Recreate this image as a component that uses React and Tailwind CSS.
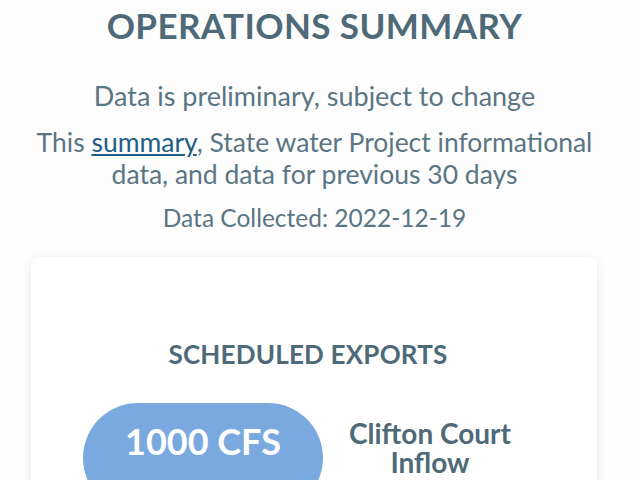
import React from 'react';

const font = { fontFamily: 'Lato, "Open Sans", sans-serif' };

const App = () => {
  return (
    <div className="min-h-[480px] w-[640px] overflow-hidden bg-[#fdfdfd] text-[#5a7583]" style={font}>
      <div className="flex flex-col items-center pr-[11px] text-center">
        <h1 className="mt-[1px] text-[35px] font-bold leading-[48px] tracking-[0.4px] text-[#4e6a78]">
          OPERATIONS SUMMARY
        </h1>
        <p className="mt-[31px] text-[27px] leading-[32px]">Data is preliminary, subject to change</p>
        <p className="mt-[14px] max-w-[560px] text-[26.5px] leading-[32px]">
          This{' '}
          <a href="#" className="text-[#1f5f86] underline underline-offset-2">
            summary
          </a>
          , State water Project informational data, and data for previous 30 days
        </p>
        <p className="mt-[13px] text-[24.5px] leading-[30px]">Data Collected: 2022-12-19</p>
      </div>

      <div className="ml-[31px] mt-[24px] h-[300px] w-[566px] rounded-lg bg-white shadow-[0_2px_12px_rgba(0,0,0,0.08)]">
        <div className="flex flex-col items-center pr-[12px] pt-[82px]">
          <h2 className="text-[26px] font-bold leading-[30px] tracking-[0.2px] text-[#4e6a78]">
            SCHEDULED EXPORTS
          </h2>
        </div>
        <div className="mt-[34px] flex items-center pl-[52px]">
          <div className="flex h-[110px] w-[240px] items-center justify-center rounded-full bg-[#7aa9e0] pb-[34px]">
            <span className="text-[36px] font-bold text-white">1000 CFS</span>
          </div>
          <div className="ml-[17px] w-[180px] pb-[20px] text-center text-[28px] font-bold leading-[29px] text-[#4e6a78]">
            Clifton Court Inflow
          </div>
        </div>
      </div>
    </div>
  );
};

export default App;
